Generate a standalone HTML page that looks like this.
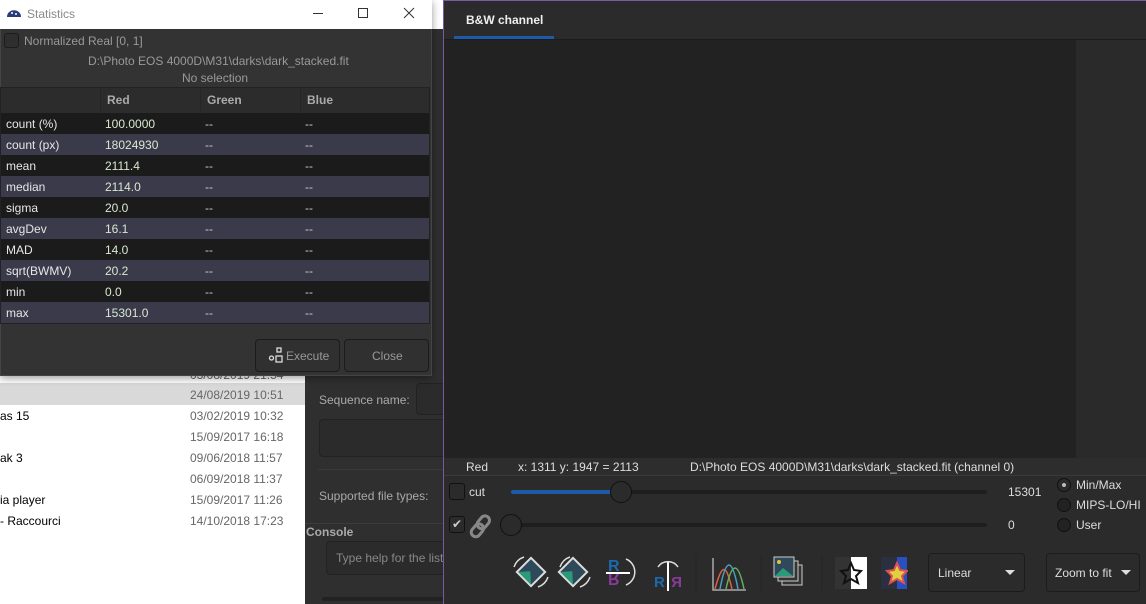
<!DOCTYPE html>
<html><head><meta charset="utf-8"><style>
*{box-sizing:border-box;margin:0;padding:0}
body{width:1146px;height:604px;overflow:hidden;position:relative;background:#2f2f2f;font-family:"Liberation Sans",sans-serif;font-size:12px}
.a{position:absolute}
.t{position:absolute;white-space:nowrap}
</style></head><body>
<!-- explorer -->
<div class="a" style="left:0;top:360px;width:305px;height:244px;background:#fff"></div>
<div class="a" style="left:0;top:383px;width:305px;height:22px;background:#d9d9d9"></div>
<div class="t" style="left:190px;top:368px;color:#666">03/08/2019 21:54</div>
<div class="t" style="left:190px;top:388px;color:#666">24/08/2019 10:51</div>
<div class="t" style="left:0;top:409px;color:#000">as 15</div><div class="t" style="left:190px;top:409px;color:#666">03/02/2019 10:32</div>
<div class="t" style="left:190px;top:430px;color:#666">15/09/2017 16:18</div>
<div class="t" style="left:0;top:451px;color:#000">ak 3</div><div class="t" style="left:190px;top:451px;color:#666">09/06/2018 11:57</div>
<div class="t" style="left:190px;top:472px;color:#666">06/09/2018 11:37</div>
<div class="t" style="left:0;top:493px;color:#000">ia player</div><div class="t" style="left:190px;top:493px;color:#666">15/09/2017 11:26</div>
<div class="t" style="left:0;top:514px;color:#000">- Raccourci</div><div class="t" style="left:190px;top:514px;color:#666">14/10/2018 17:23</div>
<!-- middle panel -->
<div class="a" style="left:305px;top:360px;width:140px;height:244px;background:#2f2f2f"></div>
<div class="a" style="left:431px;top:0;width:12px;height:29px;background:#fff"></div>
<div class="t" style="left:319px;top:393px;color:#aaa">Sequence name:</div>
<div class="a" style="left:416px;top:383px;width:40px;height:32px;border:1px solid #222;border-radius:4px;background:#2b2b2b"></div>
<div class="a" style="left:319px;top:419px;width:140px;height:38px;border:1px solid #222;border-radius:4px;background:#2b2b2b"></div>
<div class="a" style="left:318px;top:469px;width:126px;height:1px;background:#3a3a3a"></div>
<div class="t" style="left:319px;top:489px;color:#aaa">Supported file types:</div>
<div class="a" style="left:305px;top:523px;width:139px;height:1px;background:#3c3c3c"></div>
<div class="t" style="left:306px;top:525px;color:#aaa;font-weight:bold">Console</div>
<div class="a" style="left:326px;top:541px;width:130px;height:34px;border:1px solid #222;border-radius:4px;background:#2b2b2b"></div>
<div class="t" style="left:336px;top:551px;color:#888">Type help for the list</div>
<div class="a" style="left:322px;top:597px;width:122px;height:4px;background:#222;border-radius:2px"></div>
<!-- main window -->
<div class="a" style="left:443px;top:0;width:703px;height:604px;background:#2b2b2b;border-left:1px solid #7a5aa8;border-top:1px solid #7a5aa8"></div>
<div class="t" style="left:466px;top:13px;color:#eee;font-weight:bold">B&amp;W channel</div>
<div class="a" style="left:454px;top:36px;width:100px;height:3px;background:#1f5aa8"></div>
<div class="a" style="left:444px;top:39px;width:702px;height:1px;background:#1c1c1c"></div>
<div class="a" style="left:444px;top:40px;width:632px;height:418px;background:#222"></div>
<div class="a" style="left:1076px;top:40px;width:70px;height:418px;background:#2a2a2a"></div>
<div class="a" style="left:444px;top:458px;width:702px;height:17px;background:#2d2d2d"></div>
<div class="t" style="left:466px;top:460px;color:#ddd">Red</div>
<div class="t" style="left:518px;top:460px;color:#ddd">x: 1311 y: 1947 = 2113</div>
<div class="t" style="left:690px;top:460px;color:#ddd">D:\Photo EOS 4000D\M31\darks\dark_stacked.fit (channel 0)</div>
<div class="a" style="left:444px;top:475px;width:702px;height:1px;background:#3a3a3a"></div>
<div class="a" style="left:449px;top:483px;width:16px;height:17px;border:1px solid #111;border-radius:3px;background:#2b2b2b"></div>
<div class="t" style="left:469px;top:485px;color:#ddd">cut</div>
<div class="a" style="left:511px;top:490px;width:476px;height:4px;background:#1e1e1e;border-radius:2px"></div>
<div class="a" style="left:511px;top:490px;width:110px;height:4px;background:#1f5aa8;border-radius:2px"></div>
<div class="a" style="left:610px;top:481px;width:22px;height:22px;border-radius:50%;background:#2b2b2b;border:1px solid #111"></div>
<div class="t" style="left:1008px;top:485px;color:#ddd">15301</div>
<div class="a" style="left:449px;top:516px;width:16px;height:17px;border:1px solid #111;border-radius:3px;background:#2b2b2b;color:#ccc;font-size:12px;text-align:center;line-height:15px">✔</div>
<svg class="a" style="left:467px;top:513px" width="28" height="26"><g fill="none" stroke="#888" stroke-width="3"><rect x="12" y="2" width="9" height="14" rx="4.5" transform="rotate(40 16 9)"/><rect x="6" y="10" width="9" height="14" rx="4.5" transform="rotate(40 10 17)"/></g></svg>
<div class="a" style="left:511px;top:523px;width:476px;height:4px;background:#1e1e1e;border-radius:2px"></div>
<div class="a" style="left:500px;top:514px;width:22px;height:22px;border-radius:50%;background:#2b2b2b;border:1px solid #111"></div>
<div class="t" style="left:1008px;top:518px;color:#ddd">0</div>
<div class="a" style="left:1057px;top:478px;width:14px;height:14px;border-radius:50%;background:#2b2b2b;border:1px solid #111"></div><div class="a" style="left:1062px;top:483px;width:4px;height:4px;border-radius:50%;background:#bbb"></div>
<div class="t" style="left:1076px;top:478px;color:#ddd">Min/Max</div>
<div class="a" style="left:1057px;top:498px;width:14px;height:14px;border-radius:50%;background:#222;border:1px solid #111"></div>
<div class="t" style="left:1076px;top:498px;color:#ddd">MIPS-LO/HI</div>
<div class="a" style="left:1057px;top:518px;width:14px;height:14px;border-radius:50%;background:#222;border:1px solid #111"></div>
<div class="t" style="left:1076px;top:518px;color:#ddd">User</div>
<!-- toolbar icons -->
<svg class="a" style="left:508px;top:553px" width="400" height="40">
<g transform="rotate(45 23 19)"><rect x="13" y="9" width="20" height="20" fill="#2e4a5a" stroke="#ddd" stroke-width="2"/><path d="M14 28 L22 19 L32 28Z" fill="#2a9a7a"/></g>
<path d="M6 14 A16 16 0 0 1 16 4" stroke="#ddd" fill="none" stroke-width="1.5"/><path d="M40 24 A16 16 0 0 1 30 34" stroke="#ddd" fill="none" stroke-width="1.5"/>
<g transform="rotate(45 65 19)"><rect x="55" y="9" width="20" height="20" fill="#2e4a5a" stroke="#ddd" stroke-width="2"/><path d="M56 28 L64 19 L74 28Z" fill="#2a9a7a"/></g>
<path d="M52 14 A16 16 0 0 1 62 4" stroke="#ddd" fill="none" stroke-width="1.5"/><path d="M82 24 A16 16 0 0 1 72 34" stroke="#ddd" fill="none" stroke-width="1.5"/>
<text x="100" y="18" fill="#1a6ab0" font-weight="bold" font-size="16" font-family="Liberation Sans">R</text>
<text x="100" y="35" fill="#8a3a9a" font-weight="bold" font-size="16" font-family="Liberation Sans" transform="scale(1,-1) translate(0,-56)">R</text>
<line x1="98" y1="20" x2="122" y2="20" stroke="#fff" stroke-width="2"/>
<path d="M118 6 A14 14 0 0 1 118 32" stroke="#ddd" fill="none" stroke-width="1.5"/>
<text x="146" y="34" fill="#1a6ab0" font-weight="bold" font-size="15" font-family="Liberation Sans">R</text>
<text x="-174" y="34" fill="#8a3a9a" font-weight="bold" font-size="15" font-family="Liberation Sans" transform="scale(-1,1)">R</text>
<line x1="160" y1="8" x2="160" y2="38" stroke="#fff" stroke-width="2"/>
<path d="M150 14 A12 12 0 0 1 170 14" stroke="#ddd" fill="none" stroke-width="1.5"/>
<line x1="188" y1="2" x2="188" y2="38" stroke="#262626"/>
<path d="M205 5 V37 H238" stroke="#aaa" fill="none" stroke-width="1.5"/>
<path d="M207 36 C214 10 218 10 224 36" stroke="#e06040" fill="none" stroke-width="1.5"/>
<path d="M212 36 C218 4 224 4 230 36" stroke="#4aa0c0" fill="none" stroke-width="1.5"/>
<path d="M218 36 C224 8 230 8 236 36" stroke="#60b060" fill="none" stroke-width="1.5"/>
<line x1="253" y1="2" x2="253" y2="38" stroke="#262626"/>
<rect x="274" y="12" width="20" height="20" fill="#333" stroke="#ccc"/><rect x="270" y="8" width="20" height="20" fill="#333" stroke="#ccc"/>
<rect x="266" y="4" width="20" height="20" fill="#2e4a5a" stroke="#ccc"/><path d="M267 23 L275 15 L285 23Z" fill="#2a9a7a"/><circle cx="271" cy="9" r="2" fill="#e0c040"/>
<line x1="314" y1="2" x2="314" y2="38" stroke="#262626"/>
<rect x="327" y="4" width="16" height="32" fill="#333"/><rect x="343" y="4" width="16" height="32" fill="#fff"/>
<path d="M343 10 L346 17 L353 18 L348 23 L350 30 L343 26 L336 30 L338 23 L333 18 L340 17Z" fill="none" stroke="#111" stroke-width="2"/>
<rect x="373" y="4" width="16" height="32" fill="#2a3040"/><rect x="389" y="4" width="10" height="32" fill="#2a50c0"/>
<path d="M389 10 L392 17 L399 18 L394 23 L396 30 L389 26 L382 30 L384 23 L379 18 L386 17Z" fill="#e0d040" stroke="#e05050" stroke-width="2"/>
</svg>
<div class="a" style="left:928px;top:553px;width:97px;height:39px;border:1px solid #1c1c1c;border-radius:4px;background:#2b2b2b"></div>
<div class="t" style="left:938px;top:566px;color:#ddd">Linear</div>
<div class="a" style="left:1005px;top:570px;border-left:5px solid transparent;border-right:5px solid transparent;border-top:5px solid #ddd"></div>
<div class="a" style="left:1046px;top:553px;width:94px;height:39px;border:1px solid #1c1c1c;border-radius:4px;background:#2b2b2b"></div>
<div class="t" style="left:1055px;top:566px;color:#ddd">Zoom to fit</div>
<div class="a" style="left:1121px;top:570px;border-left:5px solid transparent;border-right:5px solid transparent;border-top:5px solid #ddd"></div>
<!-- statistics dialog -->
<div class="a" style="left:0;top:0;width:432px;height:376px;background:#333;border:1px solid #444;box-shadow:0 2px 8px rgba(0,0,0,.4)"></div>
<div class="a" style="left:0;top:0;width:432px;height:29px;background:#fff"></div>
<svg class="a" style="left:6px;top:6px" width="16" height="12"><path d="M1 11 C1 2 15 2 15 11Z" fill="#2a3a7a"/><circle cx="6" cy="7" r="1" fill="#fff"/><circle cx="10" cy="8" r="1" fill="#fff"/></svg>
<div class="t" style="left:27px;top:7px;color:#888">Statistics</div>
<div class="a" style="left:313px;top:13px;width:10px;height:1px;background:#333"></div>
<div class="a" style="left:358px;top:8px;width:10px;height:10px;border:1px solid #333"></div>
<svg class="a" style="left:403px;top:7px" width="12" height="12"><path d="M1 1L11 11M11 1L1 11" stroke="#333"/></svg>
<div class="a" style="left:4px;top:33px;width:15px;height:15px;border:1px solid #1c1c1c;border-radius:3px;background:#2e2e2e"></div>
<div class="t" style="left:24px;top:34px;color:#999">Normalized Real [0, 1]</div>
<div class="t" style="left:88px;top:54px;color:#999">D:\Photo EOS 4000D\M31\darks\dark_stacked.fit</div>
<div class="t" style="left:182px;top:71px;color:#999">No selection</div>
<div class="a" style="left:0;top:87px;width:430px;height:237px;background:#2c2c2c;border:1px solid #222"></div>
<div class="a" style="left:100px;top:88px;width:1px;height:25px;background:#252525"></div>
<div class="a" style="left:200px;top:88px;width:1px;height:25px;background:#252525"></div>
<div class="a" style="left:300px;top:88px;width:1px;height:25px;background:#252525"></div>
<div class="t" style="left:107px;top:93px;color:#aaa;font-weight:bold">Red</div>
<div class="t" style="left:207px;top:93px;color:#aaa;font-weight:bold">Green</div>
<div class="t" style="left:307px;top:93px;color:#aaa;font-weight:bold">Blue</div>
<div class="a" style="left:1px;top:113px;width:428px">
<div style="height:21px;background:#1b1b1b;position:relative"><span class="t" style="left:5px;top:4px;color:#e6e6e6">count (%)</span><span class="t" style="left:104px;top:4px;color:#d8e8d0">100.0000</span><span class="t" style="left:204px;top:4px;color:#ccc">--</span><span class="t" style="left:304px;top:4px;color:#ccc">--</span></div>
<div style="height:21px;background:#3b3a4a;position:relative"><span class="t" style="left:5px;top:4px;color:#e6e6e6">count (px)</span><span class="t" style="left:104px;top:4px;color:#d8e8d0">18024930</span><span class="t" style="left:204px;top:4px;color:#ccc">--</span><span class="t" style="left:304px;top:4px;color:#ccc">--</span></div>
<div style="height:21px;background:#1b1b1b;position:relative"><span class="t" style="left:5px;top:4px;color:#e6e6e6">mean</span><span class="t" style="left:104px;top:4px;color:#d8e8d0">2111.4</span><span class="t" style="left:204px;top:4px;color:#ccc">--</span><span class="t" style="left:304px;top:4px;color:#ccc">--</span></div>
<div style="height:21px;background:#3b3a4a;position:relative"><span class="t" style="left:5px;top:4px;color:#e6e6e6">median</span><span class="t" style="left:104px;top:4px;color:#d8e8d0">2114.0</span><span class="t" style="left:204px;top:4px;color:#ccc">--</span><span class="t" style="left:304px;top:4px;color:#ccc">--</span></div>
<div style="height:21px;background:#1b1b1b;position:relative"><span class="t" style="left:5px;top:4px;color:#e6e6e6">sigma</span><span class="t" style="left:104px;top:4px;color:#d8e8d0">20.0</span><span class="t" style="left:204px;top:4px;color:#ccc">--</span><span class="t" style="left:304px;top:4px;color:#ccc">--</span></div>
<div style="height:21px;background:#3b3a4a;position:relative"><span class="t" style="left:5px;top:4px;color:#e6e6e6">avgDev</span><span class="t" style="left:104px;top:4px;color:#d8e8d0">16.1</span><span class="t" style="left:204px;top:4px;color:#ccc">--</span><span class="t" style="left:304px;top:4px;color:#ccc">--</span></div>
<div style="height:21px;background:#1b1b1b;position:relative"><span class="t" style="left:5px;top:4px;color:#e6e6e6">MAD</span><span class="t" style="left:104px;top:4px;color:#d8e8d0">14.0</span><span class="t" style="left:204px;top:4px;color:#ccc">--</span><span class="t" style="left:304px;top:4px;color:#ccc">--</span></div>
<div style="height:21px;background:#3b3a4a;position:relative"><span class="t" style="left:5px;top:4px;color:#e6e6e6">sqrt(BWMV)</span><span class="t" style="left:104px;top:4px;color:#d8e8d0">20.2</span><span class="t" style="left:204px;top:4px;color:#ccc">--</span><span class="t" style="left:304px;top:4px;color:#ccc">--</span></div>
<div style="height:21px;background:#1b1b1b;position:relative"><span class="t" style="left:5px;top:4px;color:#e6e6e6">min</span><span class="t" style="left:104px;top:4px;color:#d8e8d0">0.0</span><span class="t" style="left:204px;top:4px;color:#ccc">--</span><span class="t" style="left:304px;top:4px;color:#ccc">--</span></div>
<div style="height:21px;background:#3b3a4a;position:relative"><span class="t" style="left:5px;top:4px;color:#e6e6e6">max</span><span class="t" style="left:104px;top:4px;color:#d8e8d0">15301.0</span><span class="t" style="left:204px;top:4px;color:#ccc">--</span><span class="t" style="left:304px;top:4px;color:#ccc">--</span></div>
</div>
<div class="a" style="left:255px;top:339px;width:85px;height:33px;border:1px solid #1c1c1c;border-radius:4px;background:#303030"></div>
<svg class="a" style="left:268px;top:347px" width="16" height="16"><g fill="none" stroke="#ddd" stroke-width="1.3"><rect x="9" y="1" width="4" height="4"/><rect x="8" y="9" width="6" height="6"/><circle cx="3.5" cy="11" r="2"/></g></svg>
<div class="t" style="left:286px;top:349px;color:#999">Execute</div>
<div class="a" style="left:344px;top:339px;width:85px;height:33px;border:1px solid #1c1c1c;border-radius:4px;background:#303030"></div>
<div class="t" style="left:372px;top:349px;color:#999">Close</div>
</body></html>
